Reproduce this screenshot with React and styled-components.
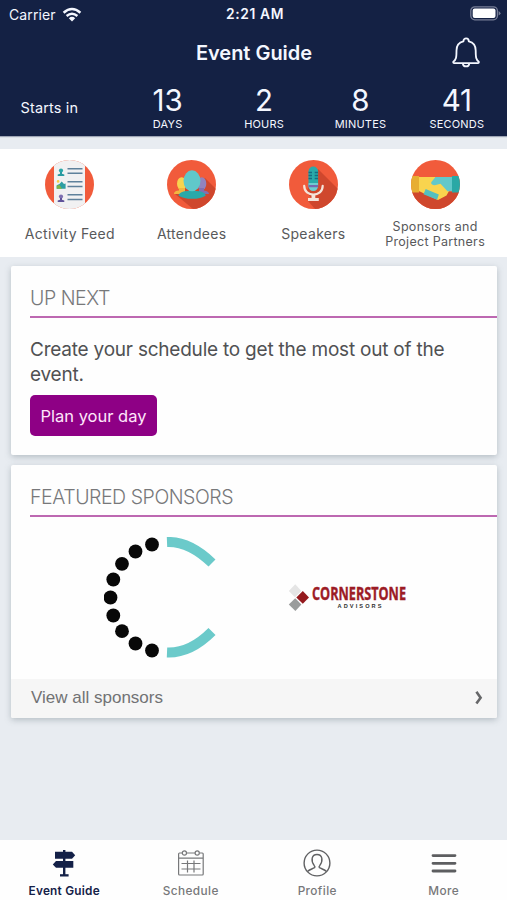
import React from 'react';
import styled, { createGlobalStyle } from 'styled-components';

const GlobalStyle = createGlobalStyle`
  * { box-sizing: border-box; }
  body {
    margin: 0;
    background: #e8ecf1;
    font-family: Inter, 'Liberation Sans', sans-serif;
  }
`;

const Screen = styled.div`
  display: flex;
  flex-direction: column;
  width: 507px;
  height: 900px;
  overflow: hidden;
  background: #e8ecf1;
`;

// Header
const Header = styled.header`
  height: 136px;
  color: #f4f7ff;
  background: #142144;
  box-shadow: 0 1px 1px rgba(20, 33, 68, 0.35);
`;

const StatusBar = styled.div`
  display: grid;
  grid-template-columns: 1fr auto 1fr;
  align-items: center;
  height: 28px;
  padding: 0 6px 0 9px;
`;

const Carrier = styled.div`
  display: flex;
  align-items: center;
  gap: 6px;
  font-size: 14px;
  letter-spacing: 0.1px;
`;

const Clock = styled.div`
  font-size: 13.8px;
  font-weight: 600;
  letter-spacing: 0.65px;
`;

const Battery = styled.div`
  display: flex;
  justify-content: flex-end;
`;

const TitleRow = styled.div`
  display: grid;
  grid-template-columns: 1fr auto 1fr;
  align-items: center;
  height: 49px;
  padding: 0 27px 0 28px;
`;

const Title = styled.h1`
  grid-column: 2;
  margin: 0;
  font-size: 20px;
  font-weight: 600;
  letter-spacing: -0.02px;
`;

const BellButton = styled.button`
  justify-self: end;
  display: flex;
  padding: 0;
  border: 0;
  color: #f4f7ff;
  background: none;
`;

const Countdown = styled.div`
  display: grid;
  grid-template-columns: 119.5px repeat(4, 96.4px);
  height: 59px;
`;

const StartsIn = styled.div`
  padding: 22px 0 0 20.5px;
  font-size: 14.5px;
  line-height: 18px;
  letter-spacing: 0.15px;
`;

const Unit = styled.div`
  display: flex;
  flex-direction: column;
  align-items: center;
  padding-top: 7px;
`;

const UnitValue = styled.div`
  font-size: 29.5px;
  line-height: 32px;
  letter-spacing: 0;
`;

const UnitLabel = styled.div`
  font-size: 11px;
  line-height: 14px;
  margin-top: 1px;
  letter-spacing: 0.2px;
`;

// Shortcuts
const Shortcuts = styled.nav`
  display: grid;
  grid-template-columns: repeat(4, 1fr);
  height: 108px;
  margin-top: 13px;
  padding: 0 11px 0 9px;
  background: #fff;
`;

const Shortcut = styled.div`
  display: flex;
  flex-direction: column;
  align-items: center;
  padding-top: 11px;
  color: #58595b;
`;

const ShortcutLabel = styled.div`
  display: flex;
  align-items: center;
  height: 30px;
  margin-top: ${({ small }) => (small ? '10px' : '9px')};
  text-align: center;
  white-space: pre;
  font-size: ${({ small }) => (small ? '12.5px' : '14px')};
  line-height: 15px;
  letter-spacing: ${({ small }) => (small ? '0.3px' : '0.3px')};
`;

// Cards
const Cards = styled.main`
  display: flex;
  flex: 1;
  flex-direction: column;
  gap: 10px;
  padding: 9px 10px 0 11px;
`;

const Card = styled.section`
  height: ${({ height }) => height};
  padding-left: 19px;
  border-radius: 2px;
  background: #fefefe;
  box-shadow: 0 2px 6px rgba(90, 105, 115, 0.35);
`;

const CardTitle = styled.h2`
  height: 52px;
  margin: 0;
  padding-top: 20px;
  border-bottom: 2px solid #bd68b1;
  color: #77787a;
  font-size: 19.5px;
  font-weight: 300;
  line-height: 24px;
  letter-spacing: -0.45px;
`;

const Message = styled.p`
  margin: 19px 0 0;
  color: #505153;
  font-size: 19px;
  line-height: 25px;
  letter-spacing: -0.22px;
  white-space: pre;
`;

const PlanButton = styled.button`
  display: block;
  width: 127px;
  height: 41px;
  margin-top: 8px;
  padding: 0;
  border: 0;
  border-radius: 5px;
  color: #ffe6fb;
  background: #8e0085;
  font-family: inherit;
  font-size: 16.5px;
`;

const Sponsors = styled.div`
  display: grid;
  grid-template-columns: 1fr 1fr;
  align-items: center;
  height: 162px;
`;

const Sponsor = styled.div`
  display: flex;
  padding-left: ${({ offset }) => offset};
`;

const CardFooter = styled.div`
  display: flex;
  align-items: center;
  justify-content: space-between;
  height: 39px;
  margin-left: -19px;
  padding: 0 14px 2px 20px;
  border-radius: 0 0 2px 2px;
  color: #717274;
  background: #f6f6f6;
  font-family: 'Liberation Sans', sans-serif;
  font-size: 17px;
`;

// Tabs
const Tabs = styled.nav`
  display: grid;
  grid-template-columns: repeat(4, 1fr);
  height: 60px;
  padding-left: 1px;
  background: #fefefe;
`;

const Tab = styled.div`
  display: flex;
  flex-direction: column;
  align-items: center;
  padding-top: 9px;
  color: ${({ active }) => (active ? '#142148' : '#77787a')};
  font-size: 11.8px;
  font-weight: ${({ active }) => (active ? 600 : 500)};
  line-height: 14px;
  letter-spacing: ${({ active }) => (active ? '0.25px' : '0.4px')};

  svg {
    margin-bottom: 7px;
  }
`;

function WifiIcon() {
  return (
    <svg width="20" height="15" viewBox="0 0 20 15" fill="none" stroke="currentColor" strokeWidth="2.5">
      <path d="M1.6 5.7 Q10 -1.6 18.4 5.7" />
      <path d="M4.6 9 Q10 4.4 15.4 9" />
      <path d="M6.8 11.2 Q10 8.3 13.2 11.2 L10 14.5Z" fill="currentColor" stroke="none" />
    </svg>
  );
}

function BatteryIcon() {
  return (
    <svg width="31" height="17" viewBox="0 0 31 17">
      <rect x="0.8" y="0.8" width="26.6" height="13" rx="4" fill="none" stroke="#777e96" strokeWidth="1.3" />
      <rect x="2.7" y="2.6" width="22.8" height="9.4" rx="2" fill="#fff" />
      <path d="M28.6 5 Q32.4 7.3 28.6 9.6Z" fill="#777e96" />
    </svg>
  );
}

function BellIcon() {
  return (
    <svg width="28" height="31" viewBox="0 0 28 31" fill="none" stroke="currentColor" strokeWidth="1.8" strokeLinejoin="round">
      <path d="M11.4 4.4 C11.4 .4 16.8 .4 16.8 4.4 C21.8 5.6 23.7 9 23.7 13.5 C23.7 20.5 24 22.5 26.9 24.9 Q27 26.1 26 26.1 H2.1 Q1.1 26.1 1.2 24.9 C4.2 22.5 4.5 20.5 4.5 13.5 C4.5 9 6.4 5.6 11.4 4.4Z" />
      <path d="M10.8 26.3 C11.2 30.5 16.9 30.5 17.3 26.3" />
    </svg>
  );
}

function FeedIcon() {
  return (
    <svg width="49" height="49" viewBox="0 0 49 49">
      <clipPath id="feed"><circle cx="24.5" cy="24.5" r="24.5" /></clipPath>
      <g clipPath="url(#feed)">
        <rect width="49" height="49" fill="#f15b3b" />
        <rect x="9" width="31" height="49" fill="#f1f1f2" />
        <path d="M22.5 8.8H37.5M22.5 13.2H37.5M22.5 21.8H37.5M22.5 26.4H37.5M22.5 34.8H37.5M22.5 39.4H37.5" stroke="#5f819b" strokeWidth="1.5" />
        <circle cx="16" cy="10.6" r="2.1" fill="#2aa7a8" />
        <path d="M15 12H17V13.8L19.3 14.5V16H12.7V14.5L15 13.8Z" fill="#2a9aa0" />
        <path d="M11.7 28.8V25.3L14.5 24L16.7 21.4L19 24L20.6 23.5V28.8Z" fill="#2d9ea3" />
        <path d="M11.7 28.8V25.8L14.5 25L17 28.8Z" fill="#7fb744" />
        <circle cx="13.1" cy="21.4" r="1.3" fill="#f7cf42" />
        <circle cx="16" cy="36.6" r="2.1" fill="#7f71b1" />
        <path d="M15 38H17V39.8L19.3 40.5V42H12.7V40.5L15 39.8Z" fill="#60539a" />
      </g>
    </svg>
  );
}

function AttendeesIcon() {
  return (
    <svg width="49" height="49" viewBox="0 0 49 49">
      <clipPath id="attendees"><circle cx="24.5" cy="24.5" r="24.5" /></clipPath>
      <g clipPath="url(#attendees)">
        <rect width="49" height="49" fill="#f15b3b" />
        <path d="M38 18L55 35V49H26L8 34Z" fill="#cf472d" />
        <ellipse cx="14.7" cy="23.7" rx="4.7" ry="6.5" fill="#f8d34e" />
        <path d="M7 34Q7 30.5 12 30.5V28H18V34Z" fill="#f2b640" />
        <ellipse cx="34.8" cy="23.7" rx="4.5" ry="6.5" fill="#9283bd" />
        <path d="M32 28H37V30.5Q42 31 42 34H32Z" fill="#8170b0" />
        <path d="M11.5 35.4Q13 31.2 20.6 31H29.4Q37.5 31.2 38.8 35.4Q34 38.8 25.2 38.8T11.5 35.4Z" fill="#2aa9a9" />
        <ellipse cx="25" cy="20.8" rx="8.5" ry="10.5" fill="#60c8ca" />
      </g>
    </svg>
  );
}

function SpeakersIcon() {
  return (
    <svg width="49" height="49" viewBox="0 0 49 49">
      <clipPath id="speakers"><circle cx="24.5" cy="24.5" r="24.5" /></clipPath>
      <g clipPath="url(#speakers)">
        <rect width="49" height="49" fill="#f15b3b" />
        <path d="M29 9L54 34V49H26L19 41H25L17 32Z" fill="#cf472d" />
        <rect x="19.5" y="6.5" width="9.6" height="24" rx="4.8" fill="#2aa9a9" />
        <path d="M19.5 23H29.1V26Q28.5 31 24.3 31Q20 31 19.5 26Z" fill="#6dccd0" />
        <path d="M19.6 25H29V27.3H19.6Z" fill="#7469b1" />
        <path d="M19.5 12.5H23M19.5 15.5H23M19.5 18.5H23M25.7 12.5H29M25.7 15.5H29M25.7 18.5H29" stroke="#176b83" strokeWidth="1.3" />
        <path d="M15.2 25.8C15.2 37.5 33.7 37.5 33.7 25.8" fill="none" stroke="#f4e4da" strokeWidth="2.2" strokeLinecap="round" />
        <path d="M22.5 34H26.3V38H29.8V41H19V38H22.5Z" fill="#f4e4da" />
      </g>
    </svg>
  );
}

function HandshakeIcon() {
  return (
    <svg width="49" height="49" viewBox="0 0 49 49">
      <clipPath id="shake"><circle cx="24.5" cy="24.5" r="24.5" /></clipPath>
      <g clipPath="url(#shake)">
        <rect width="49" height="49" fill="#f15b3b" />
        <path d="M0 31.5H49V49H0Z" fill="#cf472d" />
        <path d="M7 17H24L32 23L38 31L35.5 35.5L27 40L14 34L8 31H7Z" fill="#f9d44e" />
        <path d="M0 16H8V32.5H0Z" fill="#e7ae32" />
        <path d="M24.5 17H41V31.3H36.5L29.5 23.8L23.8 25.3Q19.6 25 20.2 22.3Z" fill="#62c8c9" />
        <path d="M41 16H49V32.5H41Z" fill="#2aa8a5" />
        <path d="M14.7 29L27.8 34.5L26 39.7L12.5 34.2Z" fill="#54bfc0" />
      </g>
    </svg>
  );
}

function RingLogo() {
  const dots = [[48, 8], [31.5, 15], [18, 27.3], [9.3, 43], [6.5, 61], [9.3, 79], [18, 94.7], [31.5, 107], [48, 114]];
  return (
    <svg width="112" height="122" viewBox="0 0.5 112 122">
      {dots.map(([x, y]) => <circle key={`${x}-${y}`} cx={x} cy={y} r="6.9" fill="#080808" />)}
      <path d="M63 5.5 C80 4.8 94 13 108 26.5" fill="none" stroke="#6bcaca" strokeWidth="10" />
      <path d="M63 116 C80 116.7 94 109 108 95" fill="none" stroke="#6bcaca" strokeWidth="10" />
    </svg>
  );
}

function CornerstoneLogo() {
  return (
    <svg width="122" height="40" viewBox="0 -5 122 40">
      <path d="M7.2 1.2L13.4 8L7 14.2L.8 8Z" fill="#e5e5e5" />
      <path d="M14.8 8L21 14.4L14.8 20.7L8.3 14.4Z" fill="#94191d" />
      <path d="M7.2 15.2L13.4 21.5L7.4 28L.8 21.5Z" fill="#9a9c9c" />
      <text x="24" y="17.3" textLength="94" lengthAdjust="spacingAndGlyphs" fontFamily="Open Sans" fontSize="18" fontWeight="700" fill="#9c1b25" stroke="#9c1b25" strokeWidth="0.4">CORNERSTONE</text>
      <text x="49.5" y="24.6" textLength="44" fontFamily="Liberation Sans" fontSize="5.6" fontWeight="700" fill="#303030">ADVISORS</text>
    </svg>
  );
}

function ChevronIcon() {
  return (
    <svg width="8" height="14" viewBox="0 0 8 14" fill="none" stroke="#666769" strokeWidth="2.6">
      <path d="M1.4 .8L5.6 6.7L1.4 12.6" />
    </svg>
  );
}

function SignpostIcon() {
  return (
    <svg width="28" height="28" viewBox="0 0 28 28" fill="currentColor">
      <path d="M13 1H15.4V26.5H13Z" />
      <path d="M5 2.8H22L25.2 6.2L22 9.7H5Z" />
      <path d="M6 12H23.3V18.8H6L2.8 15.4Z" />
      <path d="M10 25.2H18.6V27.5H10Z" />
    </svg>
  );
}

function CalendarIcon() {
  return (
    <svg width="28" height="28" viewBox="0 0 28 28" fill="none" stroke="currentColor" strokeWidth="1.2">
      <path d="M5.2 4H2.5Q1.6 4 1.6 5V25Q1.6 26 2.5 26H25.3Q26.2 26 26.2 25V5Q26.2 4 25.3 4H22.5M9.4 4H18.1M1.6 9.2H26.2" />
      <circle cx="7.4" cy="4" r="2.1" />
      <circle cx="20.2" cy="4" r="2.1" />
      <path d="M4.5 14.5H23.5M4.5 20H23.5M10.5 11.5V23.5M17 11.5V23.5" />
    </svg>
  );
}

function ProfileIcon() {
  return (
    <svg width="28" height="28" viewBox="0 0 28 28" fill="none" stroke="#606163" strokeWidth="1.4">
      <circle cx="14" cy="14" r="12.9" />
      <path d="M4.5 22.4C6.4 20.5 9.2 20.1 11.6 18.7Q12.4 17.8 11.3 16.7C7.6 11.6 8.5 5.5 14 5.5S20.4 11.6 16.7 16.7Q15.6 17.8 16.4 18.7C18.8 20.1 21.6 20.5 23.5 22.4" />
    </svg>
  );
}

function MenuIcon() {
  return (
    <svg width="28" height="28" viewBox="0 0 28 28" fill="none" stroke="#5d5e60" strokeWidth="2.8" strokeLinecap="round">
      <path d="M3 6.6H25M3 14.3H25M3 22H25" />
    </svg>
  );
}

const units = [
  { value: '13', label: 'DAYS' },
  { value: '2', label: 'HOURS' },
  { value: '8', label: 'MINUTES' },
  { value: '41', label: 'SECONDS' },
];

const shortcuts = [
  { label: 'Activity Feed', Icon: FeedIcon },
  { label: 'Attendees', Icon: AttendeesIcon },
  { label: 'Speakers', Icon: SpeakersIcon },
  { label: 'Sponsors and\nProject Partners', Icon: HandshakeIcon, small: true },
];

const tabs = [
  { label: 'Event Guide', Icon: SignpostIcon, active: true },
  { label: 'Schedule', Icon: CalendarIcon },
  { label: 'Profile', Icon: ProfileIcon },
  { label: 'More', Icon: MenuIcon },
];

export default function App() {
  return (
    <Screen>
      <GlobalStyle />
      <Header>
        <StatusBar>
          <Carrier>
            Carrier
            <WifiIcon />
          </Carrier>
          <Clock>2:21 AM</Clock>
          <Battery><BatteryIcon /></Battery>
        </StatusBar>
        <TitleRow>
          <Title>Event Guide</Title>
          <BellButton aria-label="Notifications"><BellIcon /></BellButton>
        </TitleRow>
        <Countdown>
          <StartsIn>Starts in</StartsIn>
          {units.map(({ value, label }) => (
            <Unit key={label}>
              <UnitValue>{value}</UnitValue>
              <UnitLabel>{label}</UnitLabel>
            </Unit>
          ))}
        </Countdown>
      </Header>
      <Shortcuts>
        {shortcuts.map(({ label, Icon, small }) => (
          <Shortcut key={label}>
            <Icon />
            <ShortcutLabel small={small ? 1 : 0}>{label}</ShortcutLabel>
          </Shortcut>
        ))}
      </Shortcuts>
      <Cards>
        <Card height="189px">
          <CardTitle>UP NEXT</CardTitle>
          <Message>{'Create your schedule to get the most out of the\nevent.'}</Message>
          <PlanButton>Plan your day</PlanButton>
        </Card>
        <Card height="253px">
          <CardTitle>FEATURED SPONSORS</CardTitle>
          <Sponsors>
            <Sponsor offset="74px"><RingLogo /></Sponsor>
            <Sponsor offset="24.5px"><CornerstoneLogo /></Sponsor>
          </Sponsors>
          <CardFooter>
            View all sponsors
            <ChevronIcon />
          </CardFooter>
        </Card>
      </Cards>
      <Tabs>
        {tabs.map(({ label, Icon, active }) => (
          <Tab key={label} active={active ? 1 : 0}>
            <Icon />
            {label}
          </Tab>
        ))}
      </Tabs>
    </Screen>
  );
}
